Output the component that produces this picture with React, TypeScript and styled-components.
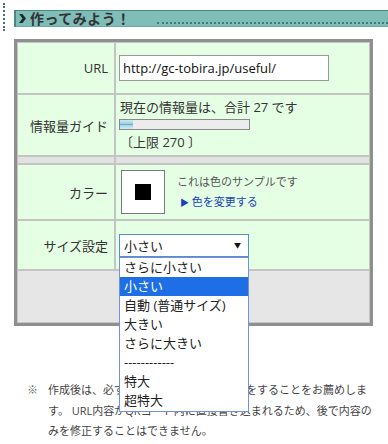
import styled, { createGlobalStyle } from "styled-components";

const GlobalStyle = createGlobalStyle`
  html, body {
    margin: 0;
    padding: 0;
    background: #fff;
  }
  body {
    font-family: "Open Sans", "Noto Sans CJK JP", sans-serif;
    color: #333;
  }
`;

const sizes = ["さらに小さい", "小さい", "自動 (普通サイズ)", "大きい", "さらに大きい", "------------", "特大", "超特大"];

function App() {
  const selected = "小さい";

  return (
    <Page>
      <GlobalStyle />
      <TopArea>
        <Dots />
        <TitleBar>
          <svg width="7" height="9" viewBox="0 0 7 9">
            <path d="M0 0 L3.5 0 L7 4.5 L3.5 9 L0 9 L3.5 4.5 Z" fill="#1f2a2a" />
          </svg>
          <Title>作ってみよう！</Title>
          <TitleDots />
        </TitleBar>
      </TopArea>

      <FormTable>
        <tbody>
          <tr>
            <Label $h={50}>URL</Label>
            <Value>
              <UrlInput defaultValue="http://gc-tobira.jp/useful/" />
            </Value>
          </tr>
          <tr>
            <Label $h={60}>情報量ガイド</Label>
            <Value>
              <Line>現在の情報量は、合計 27 です</Line>
              <Meter>
                <MeterFill style={{ width: `${(27 / 270) * 100}%` }} />
              </Meter>
              <Line>〔上限 270 〕</Line>
            </Value>
          </tr>
          <tr>
            <Spacer />
            <Spacer />
          </tr>
          <tr>
            <Label $h={54}>カラー</Label>
            <Value>
              <ColorRow>
                <Swatch>
                  <SwatchChip $color="#000" />
                </Swatch>
                <ColorInfo>
                  <SampleNote>これは色のサンプルです</SampleNote>
                  <ChangeLink href="#">
                    <span>▶</span> 色を変更する
                  </ChangeLink>
                </ColorInfo>
              </ColorRow>
            </Value>
          </tr>
          <tr>
            <Label $h={48}>サイズ設定</Label>
            <Value>
              <SelectWrap>
                <SelectBox>
                  {selected}
                  <Arrow>▼</Arrow>
                </SelectBox>
                <OptionList>
                  {sizes.map((s) => (
                    <OptionItem key={s} $active={s === selected}>
                      {s}
                    </OptionItem>
                  ))}
                </OptionList>
              </SelectWrap>
            </Value>
          </tr>
          <tr>
            <Footer colSpan={2} />
          </tr>
        </tbody>
      </FormTable>

      <Notes>
        <Mark>※</Mark>
        <NoteText>
          作成後は、必ず実際に読み取り動作確認をすることをお薦めしま
          <br />
          す。 URL内容がQRコード内に直接書き込まれるため、後で内容の
          <br />
          みを修正することはできません。
        </NoteText>
      </Notes>
    </Page>
  );
}

export default App;

const Page = styled.div`
  width: 388px;
  height: 444px;
  overflow: hidden;
  position: relative;
`;

const TopArea = styled.div`
  display: flex;
  align-items: flex-start;
`;

const Dots = styled.div`
  margin: 3px 0 0 3px;
  width: 0;
  height: 28px;
  border-left: 2px dotted #4d6f70;
`;

const TitleBar = styled.div`
  flex: 1;
  margin: 10px 0 0 9px;
  height: 15px;
  display: flex;
  align-items: center;
  gap: 4px;
  padding-left: 3px;
  background: #7fbdb9;
  border-top: 1px solid #4c8985;
  border-left: 2px solid #4c8985;
  border-bottom: 1px solid #6aa9a5;
`;

const Title = styled.span`
  font-size: 14px;
  font-weight: bold;
  color: #333;
  line-height: 15px;
  letter-spacing: 0.5px;
`;

const TitleDots = styled.div`
  flex: 1;
  align-self: flex-end;
  margin: 0 0 2px 22px;
  border-bottom: 2px dotted #3f7a76;
`;

const FormTable = styled.table`
  margin: 8px 0 0 14px;
  width: 359px;
  border: 3px solid #8f8f8f;
  border-collapse: separate;
  border-spacing: 0;
  font-size: 13px;
  color: #333;

  td {
    border: 1px solid #c4c4c4;
    padding: 0;
  }
`;

const Label = styled.td<{ $h: number }>`
  width: 90px;
  height: ${(p) => p.$h}px;
  padding-right: 6px !important;
  text-align: right;
  vertical-align: middle;
  background: #e5ffe5;
`;

const Value = styled.td`
  padding: 3px 3px !important;
  vertical-align: middle;
  background: #e5ffe5;
`;

const Spacer = styled.td`
  height: 6px;
  background: #e2e2e2;
`;

const Footer = styled.td`
  height: 51px;
  background: #e6e6e6;
`;

const UrlInput = styled.input`
  box-sizing: border-box;
  width: 210px;
  height: 26px;
  padding: 0 3px;
  border: 1px solid #999;
  font: inherit;
  font-size: 13px;
  color: #111;
  background: #fff;
  outline: none;
`;

const Line = styled.div`
  line-height: 17px;
  padding-left: 1px;
`;

const Meter = styled.div`
  box-sizing: border-box;
  margin: 3px 0 4px;
  width: 131px;
  height: 11px;
  border: 1px solid #8a8a8a;
  background: #ececec;
`;

const MeterFill = styled.div`
  height: 100%;
  background: linear-gradient(#cde8f2 0%, #9fd0e4 40%, #6aaecb 50%, #a8d6e8 60%, #d4ecf5 100%);
`;

const ColorRow = styled.div`
  display: flex;
  align-items: center;
  gap: 12px;
  padding-left: 2px;
`;

const Swatch = styled.div`
  box-sizing: border-box;
  width: 44px;
  height: 44px;
  border: 1px solid #7a7a7a;
  background: #fff;
  display: flex;
  align-items: center;
  justify-content: center;
`;

const SwatchChip = styled.div<{ $color: string }>`
  width: 16px;
  height: 16px;
  background: ${(p) => p.$color};
`;

const ColorInfo = styled.div`
  display: flex;
  flex-direction: column;
  gap: 4px;
  font-size: 11px;
  line-height: 16px;
`;

const SampleNote = styled.span`
  color: #555;
`;

const ChangeLink = styled.a`
  color: #1a3fb8;
  text-decoration: none;
  padding-left: 3px;

  span {
    font-size: 9px;
    color: #1a3fb8;
  }
`;

const SelectWrap = styled.div`
  position: relative;
  width: 130px;
`;

const SelectBox = styled.div`
  box-sizing: border-box;
  height: 23px;
  display: flex;
  align-items: center;
  justify-content: space-between;
  padding: 0 7px 0 4px;
  border: 1px solid #5a8ad8;
  background: #fff;
  color: #222;
`;

const Arrow = styled.span`
  font-size: 7px;
  color: #111;
`;

const OptionList = styled.ul`
  position: absolute;
  top: 100%;
  left: 0;
  z-index: 2;
  box-sizing: border-box;
  width: 130px;
  margin: 0;
  padding: 0 0 1px;
  list-style: none;
  border: 1px solid #6f93d6;
  background: #fff;
`;

const OptionItem = styled.li<{ $active: boolean }>`
  height: 19px;
  line-height: 19px;
  padding-left: 4px;
  white-space: nowrap;
  color: ${(p) => (p.$active ? "#fff" : "#222")};
  background: ${(p) => (p.$active ? "#1e6fe6" : "#fff")};
`;

const Notes = styled.div`
  display: flex;
  margin: 54px 0 0 27px;
  font-size: 11px;
  line-height: 20.5px;
  color: #444;
`;

const Mark = styled.span`
  width: 21px;
  flex-shrink: 0;
  color: #666;
`;

const NoteText = styled.p`
  margin: 0;
  white-space: nowrap;
`;
